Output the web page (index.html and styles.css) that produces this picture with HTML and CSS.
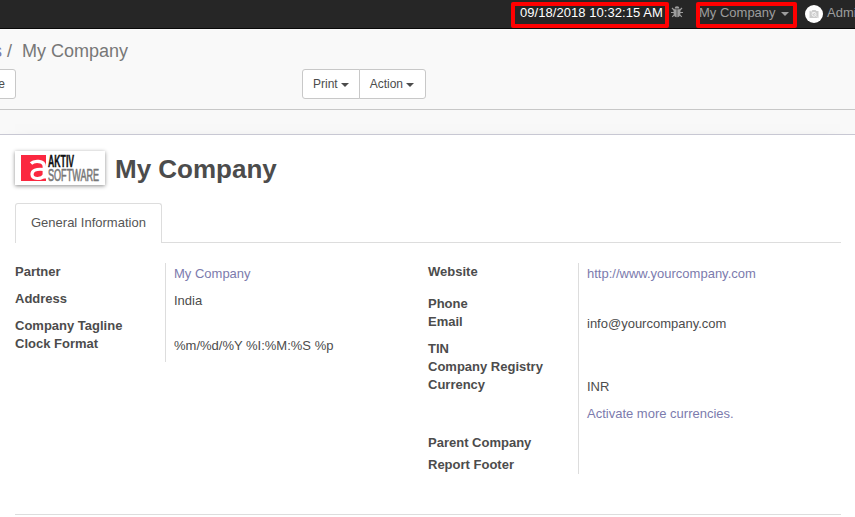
FILE: index.html
```html
<!DOCTYPE html>
<html lang="en">
<head>
<meta charset="utf-8">
<title>My Company</title>
<link rel="stylesheet" href="styles.css">
</head>
<body>
<nav class="topbar">
  <span class="clock marked">09/18/2018 10:32:15 AM</span>
  <svg class="bug" width="12" height="12" viewBox="0 0 12 12">
    <path d="M3.600 2.600a2.400 2.400 0 0 1 4.800 0z M2.600 3.200h3.100v8.100C4 11.100 2.600 9.700 2.600 7.500z M6.300 3.200h3.100v4.300c0 2.200-1.400 3.600-3.100 3.800z" fill="#9d9d9d"/>
    <path d="M1 2 3.300 4.200M11 2 8.700 4.200M0 6.500H3M9 6.500h3M1.200 10.900 3.500 8.600M10.800 10.900 8.500 8.600" fill="none" stroke="#9d9d9d" stroke-width="1.200"/>
  </svg>
  <span class="company marked">My Company <i class="caret"></i></span>
  <svg class="avatar" width="18" height="18" viewBox="0 0 18 18">
    <circle cx="9" cy="9" r="9" fill="#fff"/>
    <path d="M4.500 6h2l1-1h3l1 1h2v7h-9z" fill="#ccc"/>
    <circle cx="9" cy="9.300" r="2" fill="#ccc" stroke="#f5f5f5" stroke-width="1"/>
    <path d="m4.500 5 9 8" stroke="#eee" stroke-width=".8"/>
  </svg>
  <span class="user">Administrator</span>
</nav>
<header class="control">
  <div class="crumbs"><a>s</a><span class="slash">/</span><span>My Company</span></div>
  <div class="buttons">
    <button class="create">e</button>
    <div class="group"><button class="print">Print <i class="caret"></i></button><button class="action">Action <i class="caret"></i></button></div>
  </div>
</header>
<main class="sheet">
  <div class="title">
    <svg class="logo" width="90" height="34" viewBox="0 0 90 34">
      <path d="M6 4h25v26H6z" fill="#fb2840"/>
      <path d="M16 12.500C19 9.500 29.300 9 29.300 15.500V27.500" fill="none" stroke="#fff" stroke-width="3.400"/>
      <path d="M29 18.500C21 17.500 16.800 19.500 17 23.500c.3 5.300 9.500 5 12.200 1" fill="none" stroke="#fff" stroke-width="3.200"/>
      <text class="brand" x="0" y="0" transform="translate(33 15.800) scale(.58 1)" textLength="45" lengthAdjust="spacingAndGlyphs">AKTIV</text>
      <text class="brand-sub" x="0" y="0" transform="translate(33 29.700) scale(.58 1)" textLength="88" lengthAdjust="spacingAndGlyphs">SOFTWARE</text>
    </svg>
    <h1>My Company</h1>
  </div>
  <div class="tabs"><span class="tab">General Information</span></div>
  <div class="groups">
    <dl class="fields left">
      <dt>Partner</dt><dd><a>My Company</a></dd>
      <dt>Address</dt><dd>India</dd>
      <dt>Company Tagline</dt><dd></dd>
      <dt>Clock Format</dt><dd>%m/%d/%Y %I:%M:%S %p</dd>
    </dl>
    <dl class="fields right">
      <dt>Website</dt><dd><a>http://www.yourcompany.com</a></dd>
      <dt>Phone</dt><dd></dd>
      <dt>Email</dt><dd>info@yourcompany.com</dd>
      <dt>TIN</dt><dd></dd>
      <dt>Company Registry</dt><dd></dd>
      <dt>Currency</dt><dd>INR<a class="more">Activate more currencies.</a></dd>
      <dt>Parent Company</dt><dd></dd>
      <dt>Report Footer</dt><dd></dd>
    </dl>
  </div>
</main>
</body>
</html>
```
FILE: styles.css
```css
*, *::after { box-sizing: border-box; }
body {
  margin: 0;
  height: 517px;
  overflow: hidden;
  background: #f9f9f9;
  color: #4c4c4c;
  font: 13px/18px "Liberation Sans", Arial, sans-serif;
}
a { color: #7c7bad; }
.caret {
  display: inline-block;
  border: 4px solid transparent;
  border-top-color: currentColor;
  border-bottom: 0;
  vertical-align: middle;
}
.topbar {
  display: flex;
  height: 29px;
  padding: 4px 0 0 520px;
  background: #262626;
  border-bottom: 1px solid #080808;
  color: #9d9d9d;
  white-space: nowrap;
  overflow: hidden;
}
.topbar > * { flex: none; }
.marked { position: relative; }
.marked::after {
  content: "";
  position: absolute;
  top: -2px;
  height: 26px;
  border: 4px solid #f00;
  border-radius: 2px;
}
.clock { width: 151px; color: #fff; letter-spacing: .05px; }
.clock::after { left: -9px; width: 158px; }
.bug { margin-top: 2px; }
.company { width: 106px; margin-left: 16px; }
.company::after { left: -3px; width: 101px; }
.company .caret { margin-left: 2px; }
.avatar { margin: 1px 4px 0 0; }
.control {
  height: 81px;
  padding-top: 12px;
  border-bottom: 1px solid #c8c8c8;
}
.crumbs {
  display: flex;
  height: 20px;
  margin-left: -7px;
  color: #777;
  font-size: 18px;
  line-height: 20px;
}
.slash { margin: 0 10px 0 5px; }
.buttons { display: flex; margin-top: 8px; }
button {
  height: 30px;
  padding: 0;
  background: #fff;
  border: 1px solid #c8c8c8;
  color: #4c4c4c;
  font: 12px/18px "Liberation Sans", Arial, sans-serif;
}
.create {
  width: 36px;
  margin-left: -20px;
  padding-left: 7px;
  border-radius: 0 3px 3px 0;
}
.group { display: flex; margin-left: 286px; }
.print { width: 58px; border-radius: 3px 0 0 3px; }
.action { width: 67px; margin-left: -1px; padding-right: 1px; border-radius: 0 3px 3px 0; }
.sheet {
  height: 400px;
  margin-top: 24px;
  padding: 16px 14px 0 15px;
  background: #fff;
  border-top: 1px solid #c8c8d3;
  box-shadow: 0 5px 20px -15px #000;
}
.title { display: flex; height: 52px; }
.logo { background: #fff; box-shadow: 0 1px 4px rgba(0, 0, 0, .45); }
.brand, .brand-sub { font-family: "Liberation Sans", Arial, sans-serif; font-size: 16px; }
.brand { fill: #111; font-weight: bold; stroke: #111; stroke-width: .4px; }
.brand-sub { fill: #777; stroke: #777; stroke-width: .6px; }
h1 { margin: 0 0 0 10px; font-size: 26px; line-height: 36px; }
.tabs { height: 40px; border-bottom: 1px solid #ddd; }
.tab {
  display: block;
  width: 147px;
  height: 40px;
  padding: 10px 0 0 15px;
  background: #fff;
  border: 1px solid #ddd;
  border-bottom: 0;
  border-radius: 3px 3px 0 0;
  color: #555;
}
.groups {
  display: flex;
  align-items: flex-start;
  height: 272px;
  padding-top: 20px;
  border-bottom: 1px solid #ddd;
}
.fields {
  display: grid;
  grid-template-columns: 150px 1fr;
  width: 413px;
  margin: 0;
}
.left { grid-template-rows: 27px 27px 18px 27px; }
.right { grid-template-rows: 32px 18px 27px 18px 18px 58px 22px 18px; }
dt { font-weight: bold; }
dd { margin: 0; padding: 2px 0 0 8px; border-left: 1px solid #ddd; }
.more { display: block; margin-top: 9px; }
```
